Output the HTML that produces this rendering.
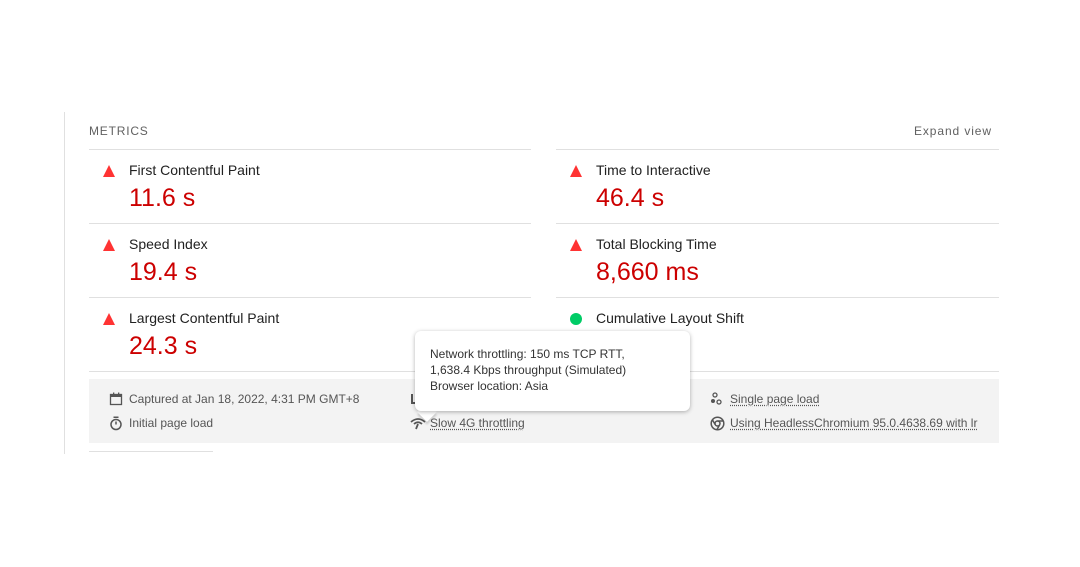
<!DOCTYPE html>
<html><head><style>
body{margin:0;width:1080px;height:567px;background:#fff;font-family:"Liberation Sans",sans-serif;position:relative;overflow:hidden;color:#212121}
.vl{position:absolute;left:64px;top:112px;width:1px;height:342px;background:#e0e0e0}
.hdr{position:absolute;top:124px;font-size:12px;letter-spacing:.8px;color:#616161}
.col{position:absolute;width:442px}
.m{height:73px;border-top:1px solid #e0e0e0;position:relative}
.tri{position:absolute;left:14px;top:15px;width:0;height:0;border-left:6px solid transparent;border-right:6px solid transparent;border-bottom:12px solid #f33}
.dot{position:absolute;left:14px;top:15px;width:12px;height:12px;border-radius:50%;background:#0c6}
.t{position:absolute;left:40px;top:12px;font-size:14px}
.v{position:absolute;left:40px;top:34px;font-size:25px;color:#c00}
.box{position:absolute;left:89px;top:379px;width:910px;height:64px;background:#f3f3f3}
.it{position:absolute;font-size:12px;color:#555;height:16px;line-height:16px}
.it svg{position:absolute;left:-20px;top:1px}
.u{text-decoration:underline dotted;text-underline-offset:2px}
.tip{position:absolute;left:415px;top:331px;width:275px;height:80px;background:#fff;border-radius:6px;box-shadow:0 1px 4px rgba(0,0,0,.3);font-size:12px;line-height:16px;color:#333;box-sizing:border-box;padding:15px 15px}
.arr{position:absolute;left:420px;top:405px;width:14px;height:14px;background:#fff;transform:rotate(45deg);box-shadow:2px 2px 2px rgba(0,0,0,.15)}
</style></head><body>
<div class="vl"></div>
<div class="hdr" style="left:89px">METRICS</div>
<div class="hdr" style="left:914px;letter-spacing:.9px">Expand view</div>
<div class="col" style="left:89px;top:149px">
<div class="m"><div class="tri"></div><div class="t">First Contentful Paint</div><div class="v">11.6 s</div></div>
<div class="m"><div class="tri"></div><div class="t">Speed Index</div><div class="v">19.4 s</div></div>
<div class="m"><div class="tri"></div><div class="t">Largest Contentful Paint</div><div class="v">24.3 s</div></div>
<div style="border-top:1px solid #e0e0e0"></div>
</div>
<div class="col" style="left:556px;top:149px;width:443px">
<div class="m"><div class="tri"></div><div class="t">Time to Interactive</div><div class="v">46.4 s</div></div>
<div class="m"><div class="tri"></div><div class="t">Total Blocking Time</div><div class="v">8,660 ms</div></div>
<div class="m"><div class="dot"></div><div class="t">Cumulative Layout Shift</div><div class="v"></div></div>
<div style="border-top:1px solid #e0e0e0"></div>
</div>
<div class="box"></div>
<div class="it" style="left:129px;top:391px"><svg width="14" height="14" viewBox="0 0 14 14"><rect x="1.5" y="2.5" width="11" height="10" fill="none" stroke="#555" stroke-width="1.3"/><rect x="1.5" y="2.5" width="11" height="2.5" fill="#555"/><rect x="4" y="0.5" width="1.3" height="3" fill="#555"/><rect x="9" y="0.5" width="1.3" height="3" fill="#555"/></svg>Captured at Jan 18, 2022, 4:31 PM GMT+8</div>
<div class="it" style="left:129px;top:415px"><svg width="14" height="15" viewBox="0 0 14 15"><circle cx="7" cy="8.5" r="5" fill="none" stroke="#555" stroke-width="1.5"/><rect x="4.5" y="0.5" width="5" height="1.5" fill="#555"/><path d="M7 8.5V5.5" stroke="#555" stroke-width="1.5"/></svg>Initial page load</div>
<div class="it" style="left:430px;top:391px"><svg width="14" height="14" viewBox="0 0 14 14"><rect x="1" y="2" width="2" height="10" fill="#555"/><rect x="1" y="10" width="9" height="2" fill="#555"/></svg></div>
<div class="it u" style="left:430px;top:415px"><svg width="16" height="14" viewBox="0 0 16 14"><path d="M1 6Q8 0 15 6M4 8Q8 4.5 12 8" fill="none" stroke="#555" stroke-width="1.8"/><path d="M8 8L6 13" stroke="#555" stroke-width="1.8"/></svg>Slow 4G throttling</div>
<div class="it u" style="left:730px;top:391px"><svg width="14" height="14" viewBox="0 0 14 14"><circle cx="5" cy="3" r="2" fill="none" stroke="#555" stroke-width="1.3"/><circle cx="3" cy="9" r="2" fill="#555"/><circle cx="9" cy="10" r="2" fill="none" stroke="#555" stroke-width="1.3"/></svg>Single page load</div>
<div class="it u" style="left:730px;top:415px"><svg width="15" height="15" viewBox="0 0 15 15"><circle cx="7.5" cy="7.5" r="6.3" fill="none" stroke="#555" stroke-width="1.5"/><circle cx="7.5" cy="7.5" r="2.5" fill="none" stroke="#555" stroke-width="1.5"/><path d="M7.5 5H13M5.3 8.8L2.5 4M9.7 8.8L7 13.5" stroke="#555" stroke-width="1.5"/></svg>Using HeadlessChromium 95.0.4638.69 with lr</div>
<div style="position:absolute;left:89px;top:451px;width:124px;height:1px;background:#e0e0e0"></div>
<div class="arr"></div>
<div class="tip">Network throttling: 150 ms TCP RTT,<br>1,638.4 Kbps throughput (Simulated)<br>Browser location: Asia</div>
</body></html>
